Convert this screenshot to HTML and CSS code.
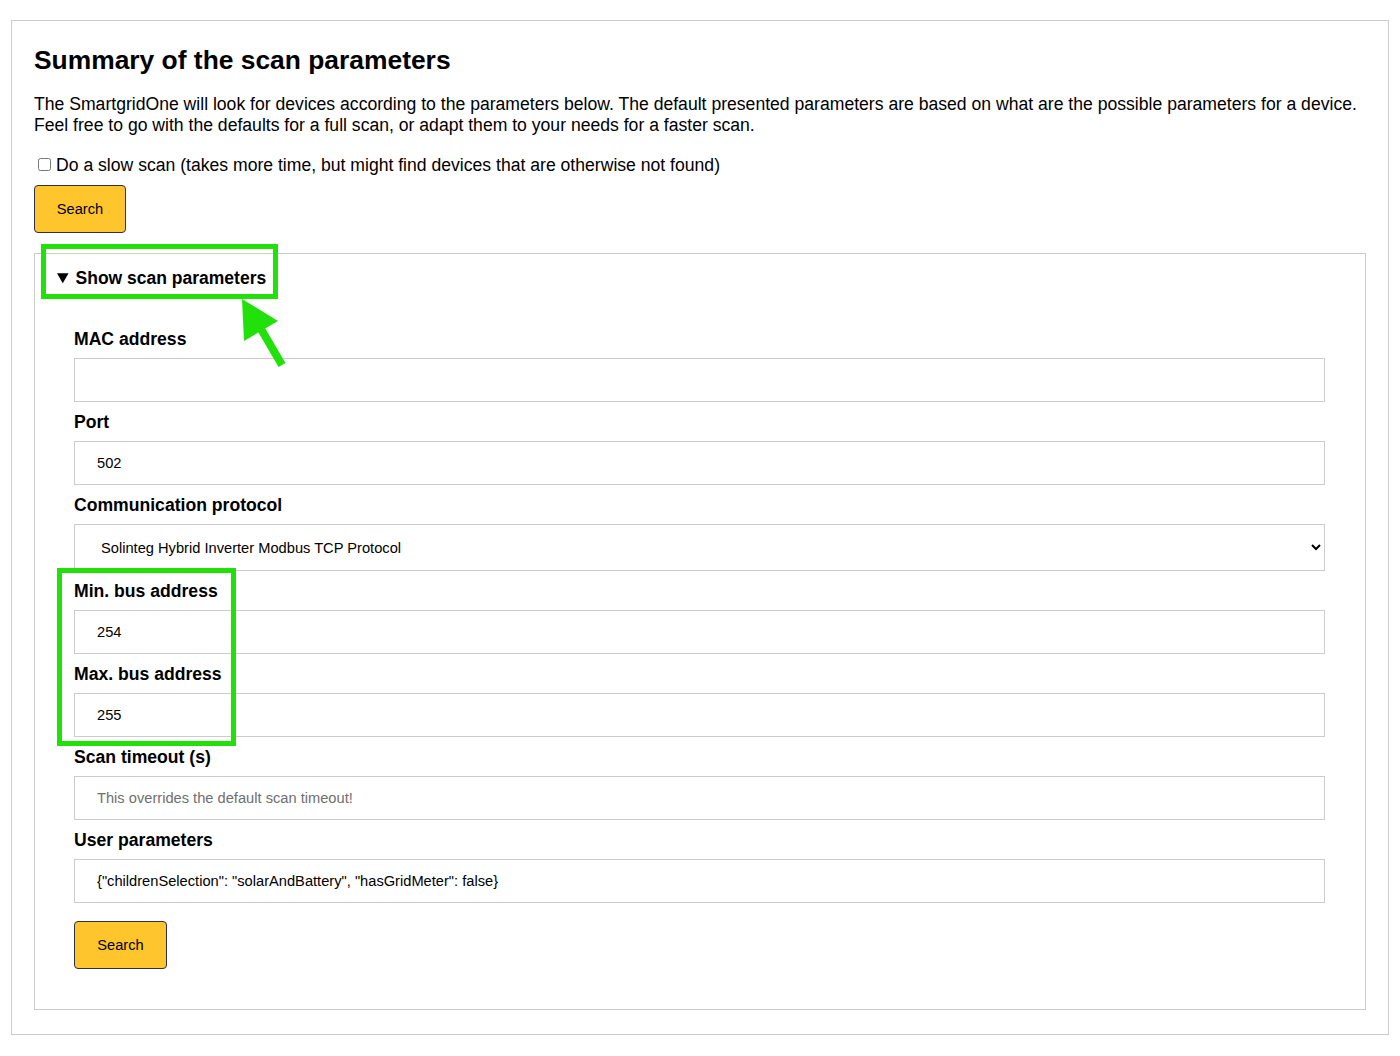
FILE: index.html
```html
<!DOCTYPE html>
<html lang="en">
<head>
    <meta charset="UTF-8">
    <title>Scan parameters</title>
    <link rel="stylesheet" href="styles.css">
</head>
<body>
    <div class="page">
        <h1>Summary of the scan parameters</h1>
        <p class="intro">The SmartgridOne will look for devices according to the parameters below. The default presented parameters are based on what are the possible parameters for a device. Feel free to go with the defaults for a full scan, or adapt them to your needs for a faster scan.</p>

        <label class="check"><input type="checkbox">Do a slow scan (takes more time, but might find devices that are otherwise not found)</label>
        <button class="btn">Search</button>

        <details class="params" open>
            <summary>Show scan parameters</summary>
            <div class="fields">
                <label for="mac">MAC address</label>
                <input type="text" id="mac">

                <label for="port">Port</label>
                <input type="text" id="port" value="502">

                <label for="protocol">Communication protocol</label>
                <select id="protocol">
                    <option>Solinteg Hybrid Inverter Modbus TCP Protocol</option>
                </select>

                <label for="minBus">Min. bus address</label>
                <input type="text" id="minBus" value="254">

                <label for="maxBus">Max. bus address</label>
                <input type="text" id="maxBus" value="255">

                <label for="timeout">Scan timeout (s)</label>
                <input type="text" id="timeout" placeholder="This overrides the default scan timeout!">

                <label for="userParams">User parameters</label>
                <input type="text" id="userParams" value='{"childrenSelection": "solarAndBattery", "hasGridMeter": false}'>

                <button class="btn btn-bottom">Search</button>
            </div>

            <!-- annotations -->
            <div class="mark mark-summary"></div>
            <div class="mark mark-bus"></div>
            <svg class="arrow" width="60" height="80" viewBox="0 0 60 80">
                <line x1="26" y1="36" x2="47" y2="72" stroke="#22e10a" stroke-width="8"/>
                <polygon points="7,6 43,28 9,48" fill="#22e10a"/>
            </svg>
        </details>
    </div>
</body>
</html>
```

FILE: styles.css
```css
body {
    margin: 0;
    font-family: "Liberation Sans", Arial, sans-serif;
    color: #000;
    background: #fff;
}
.page {
    margin: 20px 11px 21px 11px;
    padding: 1px 22px 24px 22px;
    border: 1px solid #ccc;
}
h1 {
    font-size: 26.4px;
    margin: 23px 0 18px;
}
.intro {
    font-size: 17.6px;
    line-height: 21px;
    margin: 0 0 19px;
}
.check {
    display: block;
    font-size: 17.6px;
    line-height: 21px;
    margin-bottom: 9px;
}
.check input {
    margin: 3px 5px 3px 4px;
}
.btn {
    display: block;
    font-family: "Liberation Sans", Arial, sans-serif;
    font-size: 14.67px;
    width: 92px;
    height: 48px;
    background-color: #ffc52c;
    color: #000;
    border: 1px solid #2b3050;
    border-radius: 4px;
    cursor: pointer;
}
.params {
    position: relative;
    margin-top: 20px;
    border: 1px solid #ccc;
    padding: 0 0 40px;
}
.params summary {
    font-size: 17.5px;
    font-weight: bold;
    padding: 13px 22px 0;
    line-height: 22px;
    cursor: pointer;
}
.fields {
    padding: 39px 40px 0 39px;
}
.fields label {
    display: block;
    font-size: 17.6px;
    font-weight: bold;
    line-height: 22px;
    margin-bottom: 8px;
}
.fields input,
.fields select {
    display: block;
    box-sizing: border-box;
    width: 100%;
    height: 44px;
    margin: 0 0 9px;
    padding: 0 22px;
    font-family: "Liberation Sans", Arial, sans-serif;
    font-size: 14.67px;
    color: #000;
    background: #fff;
    border: 1px solid #ccc;
}
.fields select {
    height: 47px;
    padding: 0 22px;
}
.fields input::placeholder {
    color: #6f6f6f;
}
.btn-bottom {
    width: 93px;
    height: 48px;
    margin-top: 18px;
}
.mark {
    position: absolute;
    border: 5px solid #22e10a;
}
.mark-summary {
    left: 6px;
    top: -10px;
    width: 227px;
    height: 45px;
}
.mark-bus {
    left: 22px;
    top: 314px;
    width: 169px;
    height: 168px;
}
.arrow {
    position: absolute;
    left: 200px;
    top: 39px;
}
```
